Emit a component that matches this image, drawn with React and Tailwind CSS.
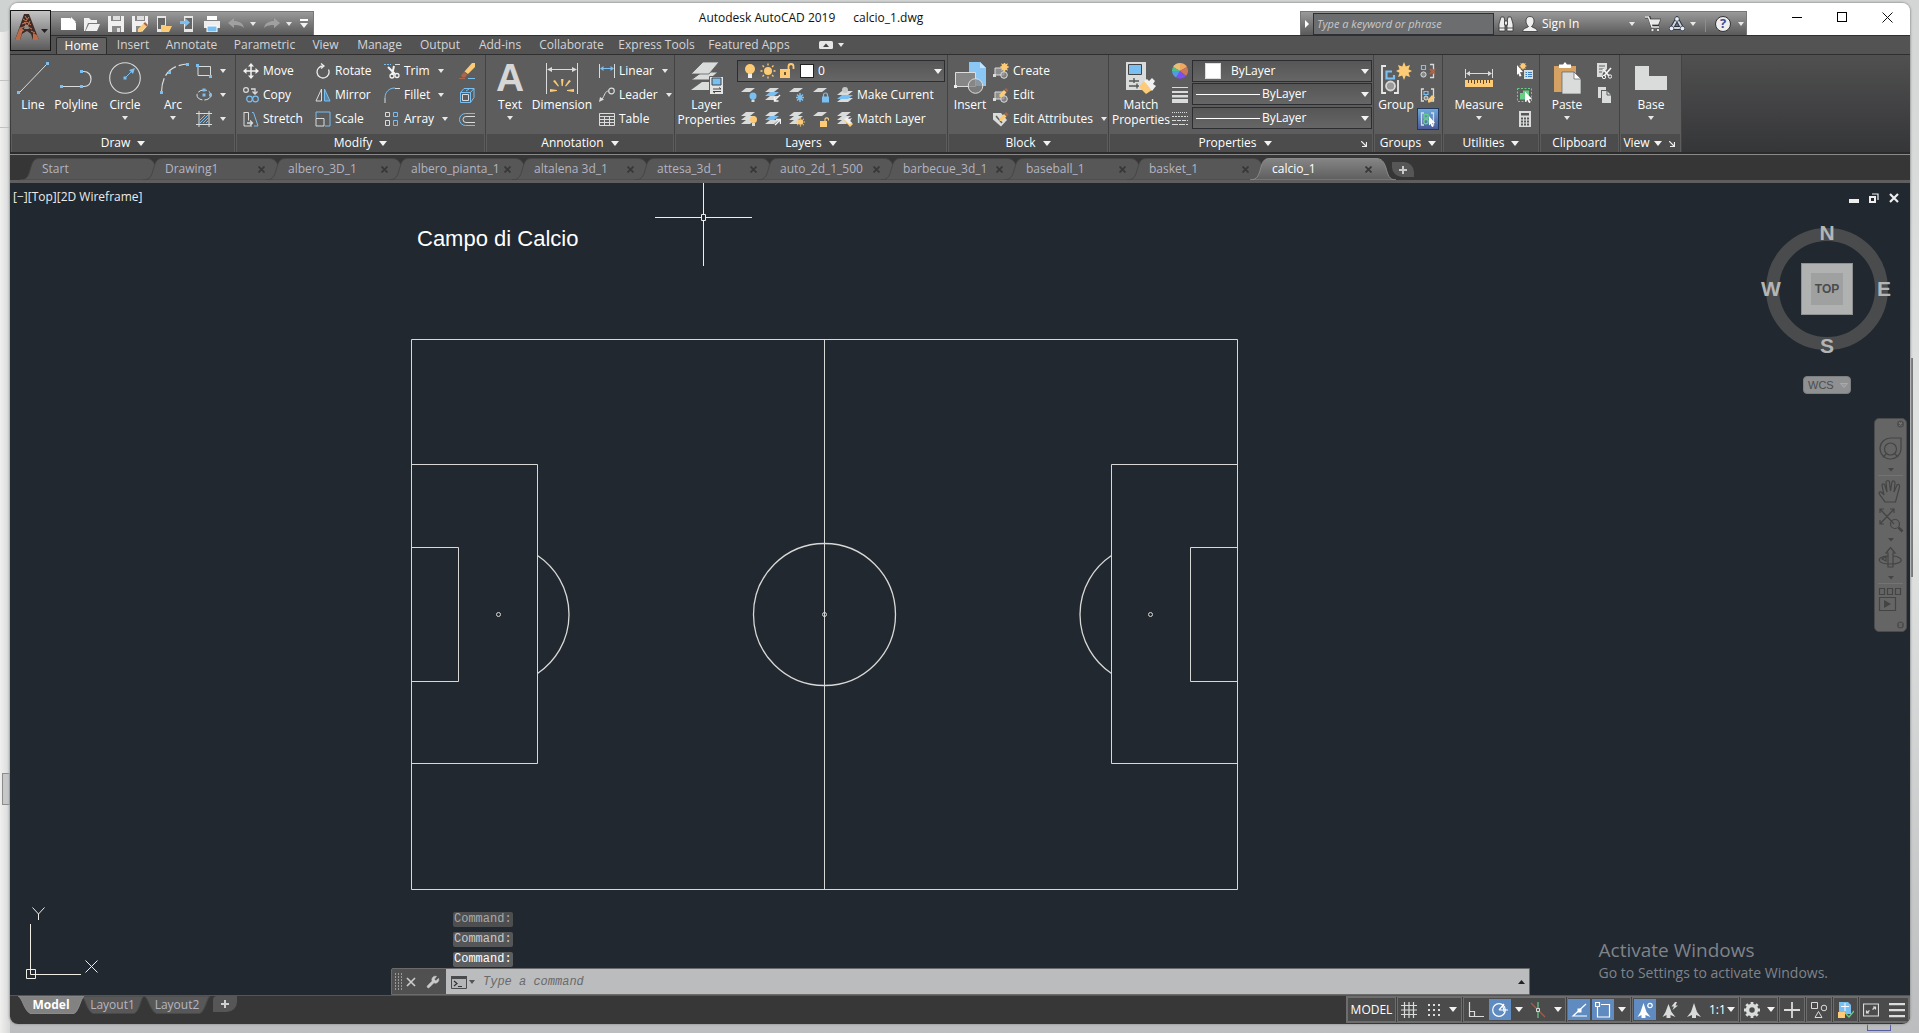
import React from "react";
import { Wrench } from "lucide-react";

const W = "#dadcdc";
const B = "#79bff2";
const Y = "#fdcb76";
const R = "#a8664a";
const G = "#66cf86";

const Tri = ({ className = "" }) => (
  <svg aria-hidden="true" className={"shrink-0 fill-[#e8e8e8] " + className} width="6" height="4" viewBox="0 0 6 4">
    <path d="M0 0h6L3 4z" />
  </svg>
);

const BigTri = ({ className = "" }) => (
  <svg aria-hidden="true" className={"shrink-0 fill-[#f2f2f2] " + className} width="8" height="5" viewBox="0 0 8 5">
    <path d="M0 0h8L4 5z" />
  </svg>
);

const sheet = (y, fill) => <path key={y} d={`M5 ${y}h9l-5 4H0z`} fill={fill} />;
const bracket = (
  <path d="M4 2H1.500V14H4M11 2h2.500v12H11" fill="none" stroke={W} strokeWidth="1.300" />
);
const sun = (cx, cy) => (
  <g stroke={Y} strokeWidth="1.200">
    <circle cx={cx} cy={cy} r="2.200" fill={Y} />
    <path d={`M${cx} ${cy - 4.5}v9M${cx - 4.5} ${cy}h9M${cx - 3.2} ${cy - 3.2}l6.400 6.400M${cx + 3.2} ${cy - 3.2}l-6.400 6.400`} strokeDasharray="1.200 6.600 1.200 0" />
  </g>
);
const pencil = (
  <g>
    <path d="M13 1l2.500 2.500-1.500 1.500L11.500 2.500z" fill={R} />
    <path d="M11 3l2.500 2.500L9 10H6.500V7.500z" fill={Y} />
  </g>
);
const blockBase = (
  <g>
    <path d="M2 5h9v7H2z" fill="#8d8d8d" stroke={W} />
    <circle cx="11" cy="12" r="3.300" fill="#8d8d8d" fillOpacity=".7" stroke={W} />
    <path d="M0 11h3v3H0z" fill={W} />
  </g>
);
const star = (x, y, r) => (
  <path
    d={`M${x} ${y - r}l${r * 0.25} ${r * 0.45} ${r * 0.45}-${r * 0.2}-${r * 0.2} ${r * 0.5} ${r * 0.5} ${r * 0.25}-${r * 0.5} ${r * 0.25} ${r * 0.2} ${r * 0.5}-${r * 0.45}-${r * 0.2}-${r * 0.25} ${r * 0.45}-${r * 0.25}-${r * 0.45}-${r * 0.45} ${r * 0.2} ${r * 0.2}-${r * 0.5}-${r * 0.5}-${r * 0.25} ${r * 0.5}-${r * 0.25}-${r * 0.2}-${r * 0.5} ${r * 0.45} ${r * 0.2}z`}
    fill={Y}
  />
);

const SMALL = {
  rect: (
    <g>
      <path d="M2 3.500h12.500v9H2z" fill="none" stroke={W} />
      <path d="M0 1h3v3H0zM13 12h3v3h-3z" fill={B} />
    </g>
  ),
  ellipse: (
    <g>
      <ellipse cx="8" cy="8" rx="7" ry="5" fill="none" stroke={W} strokeDasharray="9 2" />
      <path d="M6.500 1.500h3v3h-3zM6.500 6.500h3v3h-3zM13 6.500h3v3h-3z" fill={B} />
    </g>
  ),
  hatch: (
    <g fill="none">
      <path d="M3 0v16M13 0v16M0 2.500h16M0 13.500h16" stroke={W} />
      <path d="M4 9l5-5M4 12l8-8M7 12l5-5M10 12l2-2" stroke={B} />
    </g>
  ),
  move: (
    <g>
      <path d="M8 2v12M2 8h12" stroke="#f2f2f2" strokeWidth="1.500" />
      <path d="M8 0l3 3.500H5zM8 16l3-3.500H5zM0 8l3.500-3v6zM16 8l-3.500-3v6z" fill="#f2f2f2" />
    </g>
  ),
  copy: (
    <g fill="none">
      <circle cx="3" cy="3" r="2.400" stroke={W} strokeWidth="1.200" />
      <path d="M8 2h4v4M9.500 4.500L12 7l2.500-2.500" stroke={W} strokeWidth="1.300" />
      <circle cx="6.500" cy="12" r="2.800" stroke={B} strokeWidth="1.200" />
      <circle cx="12.500" cy="12" r="2.800" stroke={B} strokeWidth="1.200" />
    </g>
  ),
  stretch: (
    <g fill="none">
      <path d="M1 1.500h4.500v8M1 1v14h8" stroke={W} />
      <path d="M9 1.500h1.500L15 15h-4" stroke={B} />
      <path d="M4 12h5M7 9.500L9.500 12 7 14.500" stroke={W} strokeWidth="1.300" />
    </g>
  ),
  rotate: (
    <g fill="none" stroke="#ececec" strokeWidth="1.300">
      <path d="M8 3a6 6 0 1 0 5.500 3.500" />
      <path d="M6 .500L9 3 6 5.500" />
    </g>
  ),
  mirror: (
    <g fill="none">
      <path d="M6.500 2v12H1z" stroke={W} />
      <path d="M9.500 2v12H15z" stroke={B} fill="#5a86a8" />
    </g>
  ),
  scale: (
    <g fill="none">
      <path d="M1 7V1h14v14h-5" stroke={B} />
      <path d="M1 7.500h8V15H1z" stroke={W} />
    </g>
  ),
  trim: (
    <g fill="none">
      <path d="M0 1.500h7" stroke={B} strokeDasharray="2 1" />
      <path d="M11 1.500h5" stroke={W} />
      <path d="M4 4l7 7M10 3l-2 9" stroke="#f2f2f2" strokeWidth="2" />
      <circle cx="8" cy="13" r="2" stroke="#f2f2f2" strokeWidth="1.300" />
      <circle cx="13" cy="12.500" r="2" stroke="#f2f2f2" strokeWidth="1.300" />
    </g>
  ),
  fillet: (
    <g fill="none">
      <path d="M1 11C1 5 5 1 11 1" stroke={B} />
      <path d="M11 1.500h5M1 11v5" stroke={W} />
    </g>
  ),
  array: (
    <g fill="none">
      <path d="M1.500 1.500h4v4h-4zM1.500 9.500h4v5h-4z" stroke={W} />
      <path d="M9.500 1.500h4v4h-4zM9.500 9.500h4v5h-4z" stroke={B} />
    </g>
  ),
  erase: (
    <g>
      <path d="M13 0h3v4l-7 7-3.500-2.500z" fill={Y} />
      <path d="M5 9l3.500 2.500-2.500 3H3.500L2 12.500z" fill={R} />
      <path d="M0 15.500h6" stroke={R} />
      <path d="M9 15.500h7" stroke={B} />
    </g>
  ),
  explode: (
    <g fill="none">
      <path d="M1.500 5.500h10v10h-10z" stroke={B} />
      <path d="M3.500 7.500h6v6h-6z" stroke={W} />
      <path d="M1.500 5.500L5 1.500h10v9l-3.500 5M11.500 5.500L15 1.500M7 4l3-2" stroke={B} />
    </g>
  ),
  offset: (
    <g fill="none">
      <path d="M16 2.500H6.500a5.500 5.500 0 0 0 0 12H16" stroke={B} />
      <path d="M16 5.500H7a3 3 0 0 0 0 6h9" stroke={W} />
    </g>
  ),
  linear: (
    <g fill="none">
      <path d="M.500 1v14M15.500 1v14" stroke={W} />
      <path d="M2 5.500h12" stroke={B} />
      <path d="M4.500 3L1 5.500 4.500 8zM11.500 3L15 5.500 11.500 8z" fill={B} />
    </g>
  ),
  leader: (
    <g fill="none">
      <circle cx="12.500" cy="4" r="2.800" stroke={W} strokeWidth="1.200" />
      <path d="M9.500 4C6 4 6 8 2.500 13" stroke={W} />
      <path d="M0 15l1-5 4 2.500z" fill={W} />
    </g>
  ),
  table: (
    <g fill="none" stroke={W}>
      <path d="M.500 2.500h15v12H.500zM.500 5.500h15M.500 8.500h15M.500 11.500h15M5.500 5v9M10.500 5v9" />
    </g>
  ),
  lay1: (
    <g>
      {sheet(1, W)}
      <circle cx="12" cy="9" r="3.500" fill={B} />
      <path d="M10.500 12.500h3V15h-3z" fill={W} />
    </g>
  ),
  lay2: (
    <g>
      {sheet(9, W)}
      {sheet(5, B)}
      {sheet(1, W)}
      <path d="M15 8l-5 5M9.500 10v4h4" stroke="#f4f4f4" strokeWidth="1.400" fill="none" />
    </g>
  ),
  lay3: (
    <g>
      {sheet(1, W)}
      <path d="M11 6v9M7 10.500h8M8 7.500l6 6M14 7.500l-6 6" stroke={B} strokeWidth="1.500" />
    </g>
  ),
  lay4: (
    <g>
      {sheet(1, W)}
      <path d="M9 9.500h7v6H9z" fill={B} />
      <path d="M10.500 10V8a2 2 0 0 1 4 0v2" stroke={B} fill="none" strokeWidth="1.200" />
    </g>
  ),
  lay5: (
    <g>
      <path d="M5 11h11l-5 4H0z" fill={W} />
      <path d="M5 8h11l-5 4H0z" fill={B} />
      <path d="M5 4h11l-5 4H0z" fill={W} />
      <circle cx="8" cy="3" r="3" fill="#c6c8c8" />
    </g>
  ),
  lay6: (
    <g>
      {sheet(9, W)}
      {sheet(5, W)}
      {sheet(1, W)}
      <circle cx="12.500" cy="8.500" r="3.500" fill={Y} />
      <path d="M11 12h3v3h-3z" fill={W} />
    </g>
  ),
  lay7: (
    <g>
      {sheet(9, W)}
      {sheet(5, B)}
      {sheet(1, W)}
      <path d="M10 14l5-5M11 8.500h4.500V13" stroke="#f4f4f4" strokeWidth="1.400" fill="none" />
    </g>
  ),
  lay8: (
    <g>
      {sheet(9, W)}
      {sheet(5, W)}
      {sheet(1, W)}
      {sun(11.5, 11)}
    </g>
  ),
  lay9: (
    <g>
      {sheet(1, W)}
      <path d="M7 10h7v6H7z" fill={Y} />
      <path d="M12 10V8a2 2 0 0 1 3.500 0v1.500" stroke={Y} fill="none" strokeWidth="1.200" />
    </g>
  ),
  lay10: (
    <g>
      {sheet(9, W)}
      {sheet(5, W)}
      {sheet(1, W)}
      <path d="M7 9l3-2 6 6-3 3z" fill={Y} />
      <path d="M10 6l2 2 3-1-2 3 2 2-3 1-5-5z" fill="#f0f0f0" />
    </g>
  ),
  create: (
    <g>
      {blockBase}
      {star(11.5, 4, 5)}
    </g>
  ),
  edit: (
    <g>
      {blockBase}
      {pencil}
    </g>
  ),
  attrib: (
    <g>
      <path d="M0 2h8l6 7-6 6.500-8-7z" fill={W} />
      <path d="M3 5l6 7" stroke="#5d5d5d" strokeWidth="1.500" />
      {pencil}
    </g>
  ),
  wheel: (
    <g>
      <path d="M8 8V0a8 8 0 0 1 7 4z" fill="#f0a860" />
      <path d="M8 8V0a8 8 0 0 0-7 4z" fill="#e5c07a" />
      <path d="M8 8l7-4a8 8 0 0 1-1 9z" fill="#c9785a" />
      <path d="M8 8l6 5a8 8 0 0 1-10 1.500z" fill="#7b4ff0" />
      <path d="M8 8l-4 6.500A8 8 0 0 1 0 8z" fill="#4f9be8" />
      <path d="M8 8H0a8 8 0 0 1 1-4z" fill="#4fc08a" />
    </g>
  ),
  weight: <path d="M0 0h16v1H0zM0 4h16v2H0zM0 8h16v2.500H0zM0 12h16v4H0z" fill={W} />,
  ltype: (
    <g stroke={W} fill="none">
      <path d="M0 1.500h16" strokeDasharray="1 1" />
      <path d="M0 5.500h16" strokeDasharray="2 1" />
      <path d="M0 9.500h16" strokeDasharray="4 1" />
      <path d="M0 13.500h16" strokeDasharray="6 1" />
    </g>
  ),
  ungroup: (
    <g>
      <path d="M10 1.500h3.500v13H10" fill="none" stroke={W} strokeWidth="1.300" />
      <path d="M1.500 2.500h4v4h-4z" fill="none" stroke={B} strokeWidth="1.200" />
      <circle cx="3.500" cy="11.500" r="2.600" fill="#888" stroke={W} />
      <path d="M10 6l5 5M15 6l-5 5" stroke={R} strokeWidth="1.800" />
    </g>
  ),
  groupedit: (
    <g>
      {bracket}
      <path d="M4 4.500h4v3H4z" fill="none" stroke={B} strokeWidth="1.200" />
      <circle cx="6" cy="11" r="2" fill="#888" stroke={W} />
      <path d="M12 8l3 2.500-5 5H8v-3z" fill={Y} />
    </g>
  ),
  groupsel: (
    <g>
      {bracket}
      <path d="M4 3.500h4v3.500H4z" fill="none" stroke={G} strokeWidth="1.400" />
      <circle cx="6" cy="10.500" r="2.200" fill="none" stroke={G} strokeWidth="1.400" />
      <path d="M9 5l6 7-3 .300 1.500 3.200-1.500.500-1.400-3L9 14.500z" fill="#fff" />
    </g>
  ),
  qselect: (
    <g>
      {star(6, 3, 4)}
      <path d="M0 2l6 7-3 .300L4.500 13l-2 .500-1-3L0 12z" fill="#fff" />
      <path d="M7 7h9v9H7z" fill={W} />
      <path d="M8.500 9.500h1.500M11 9.500h4M8.500 11.500h1.500M11 11.500h4M8.500 13.500h1.500M11 13.500h4" stroke="#3c7fc0" />
    </g>
  ),
  selall: (
    <g>
      <path d="M.500 1.500h14v13H.500z" fill="none" stroke={G} strokeDasharray="2 1.500" />
      <path d="M3 6h3V3.500h6V9H9v3.500H3z" fill={G} />
      <path d="M8 4.500l7 7.500-3 .300 1.500 3.200-1.500.500-1.500-3L8 15z" fill="#fff" />
    </g>
  ),
  calc: (
    <g>
      <path d="M2 0h12v16H2z" fill={W} />
      <path d="M4 2h8v2.500H4z" fill="#555" />
      <path d="M4 6.500h2v2H4zM7 6.500h2v2H7zM10 6.500h2v2h-2zM4 9.500h2v2H4zM7 9.500h2v2H7zM10 9.500h2v2h-2zM4 12.500h2v2H4zM7 12.500h2v2H7zM10 12.500h2v2h-2z" fill="#555" />
    </g>
  ),
  cut: (
    <g>
      <path d="M1 0h10v6l-4 4-1 4H1z" fill={W} />
      <path d="M3 3h6M3 6h5M3 9h3" stroke="#5d5d5d" />
      <path d="M7 6l6 7M15 5l-7 8" stroke="#f4f4f4" strokeWidth="1.600" />
      <circle cx="8" cy="14" r="1.700" fill="none" stroke="#f4f4f4" />
      <circle cx="14" cy="13.500" r="1.700" fill="none" stroke="#f4f4f4" />
    </g>
  ),
  clip: (
    <g fill={W}>
      <path d="M2 0h8v3H5v8H2z" />
      <path d="M6 4h5l4 4v8H6z" />
      <path d="M11 4v4h4" fill="none" stroke="#5d5d5d" />
    </g>
  ),
  bulb: (
    <g>
      <circle cx="8" cy="6" r="5" fill={Y} />
      <path d="M6 11h4v4H6z" fill="#eee" />
      <path d="M5.500 8h5L10 11H6z" fill={Y} />
    </g>
  ),
  sunny: (
    <g>
      <circle cx="8" cy="8" r="4" fill={Y} />
      <path d="M8 .500v2M8 13.500v2M.500 8h2M13.500 8h2M2.500 2.500L4 4M12 12l1.500 1.500M13.500 2.500L12 4M4 12l-1.500 1.500" stroke={Y} strokeWidth="1.300" />
    </g>
  ),
  unlock: (
    <g>
      <path d="M1 6h10v9H1z" fill={Y} />
      <path d="M9.500 6V3.500a2.500 2.500 0 0 1 5 0V6" fill="none" stroke={Y} strokeWidth="1.800" />
      <path d="M5 9h2v3H5z" fill="#6a5530" />
    </g>
  ),
  qnew: <path d="M1 2h9l6 5v7H1zM11 1l5 5h-5z" fill="#fff" />,
  qopen: <path d="M0 15V2h5l2 2h6v3H4l-3 8zM5 8h11l-3 7H1.500z" fill="#f0f0f0" />,
  qsave: (
    <g>
      <path d="M0 0h16v16H0z" fill="#f0f0f0" />
      <path d="M3 0h10v5H3zM4 10h9v6H4z" fill="#888" />
      <path d="M5 0h7v4H5zM9 12h3v4H9z" fill="#ddd" />
    </g>
  ),
  qsaveas: (
    <g>
      <path d="M0 0h16v9l-6 7H0z" fill="#f0f0f0" />
      <path d="M3 0h10v5H3zM4 10h6v6H4z" fill="#888" />
      <path d="M5 0h7v4H5z" fill="#ddd" />
      <path d="M12 7l3 3-6 6H6v-3z" fill={Y} />
      <path d="M13 6l3 3-1.500 1.500-3-3z" fill={R} />
    </g>
  ),
  qmob1: (
    <g>
      <path d="M1 0h9v16H1z" fill="#e6e6e6" />
      <path d="M2 2h7v11H2z" fill="#666" />
      <path d="M5 9h4l1 1h6l-3 6H5z" fill={Y} />
    </g>
  ),
  qmob2: (
    <g>
      <path d="M4 0h9v16H4z" fill="#e6e6e6" />
      <path d="M5 2h7v11H5z" fill="#666" />
      <path d="M0 5h5V2l5 4.500L5 11V8H0z" fill={B} />
    </g>
  ),
  qprint: (
    <g>
      <path d="M3 0h10v4H3z" fill="#fff" />
      <path d="M0 5h16v7H0z" fill="#eee" />
      <path d="M3 10h10v6H3z" fill={B} stroke="#fff" />
    </g>
  ),
  qundo: <path d="M0 7l6-5v3c5 0 9 2 10 7-3-3-6-3-10-3v3z" fill="#a0a0a0" />,
  qredo: <path d="M16 7l-6-5v3C5 5 1 7 0 12c3-3 6-3 10-3v3z" fill="#a0a0a0" />,
  binoc: (
    <g fill="#eee" stroke="#333" strokeWidth=".800">
      <path d="M3 1h3l1 5v9H1V8zM10 1h3l2 7v7H9V6z" />
      <path d="M6.500 5h3v4h-3z" />
      <path d="M1 12h6M9 12h6" />
    </g>
  ),
  user: (
    <g fill="#f0f0f0" stroke="#333" strokeWidth=".800">
      <path d="M8 .500c3 0 4 2 4 4.500S11 9 9.500 10.500C11 12 15 12 15.500 15.500H.500C1 12 5 12 6.500 10.500 5 9 4 7.500 4 5S5 .500 8 .500z" />
    </g>
  ),
  cart: (
    <g>
      <path d="M0 1h4l3 9h7" fill="none" stroke="#333" strokeWidth="3" />
      <path d="M4 3h12l-2.500 6H6z" fill="#e8e8e8" stroke="#333" strokeWidth=".700" />
      <path d="M0 1h3.500L7 11h7" fill="none" stroke="#f0f0f0" strokeWidth="1.500" />
      <circle cx="7.500" cy="14" r="1.600" fill="#eee" stroke="#333" strokeWidth=".600" />
      <circle cx="13" cy="14" r="1.600" fill="#eee" stroke="#333" strokeWidth=".600" />
    </g>
  ),
  tri: (
    <g>
      <path d="M8 3L3 12h10z" fill="none" stroke="#2b3345" strokeWidth="4" />
      <path d="M8 3L3 12h10z" fill="none" stroke="#cfd5dd" strokeWidth="2" />
      <circle cx="8" cy="3" r="2.300" fill="#e8eef4" stroke="#2b3345" strokeWidth=".700" />
      <circle cx="2.500" cy="12.500" r="2.300" fill="#e8eef4" stroke="#2b3345" strokeWidth=".700" />
      <circle cx="13.500" cy="12.500" r="2.300" fill="#e8eef4" stroke="#2b3345" strokeWidth=".700" />
    </g>
  ),
  grid: <path d="M3.500 0v16M8 0v16M12.500 0v16M0 3.500h16M0 8h16M0 12.500h16" stroke={W} strokeWidth="1.200" />,
  snap: (
    <path d="M2 2h2v2H2zM7 2h2v2H7zM12 2h2v2h-2zM2 7h2v2H2zM7 7h2v2H7zM12 7h2v2h-2zM2 12h2v2H2zM7 12h2v2H7zM12 12h2v2h-2z" fill={W} />
  ),
  ortho: <path d="M1.500 0v14.500H16M1.500 9.500h5v5" fill="none" stroke={W} strokeWidth="1.200" />,
  polar: (
    <g fill="none" stroke="#fff" strokeWidth="1.200">
      <circle cx="7" cy="8" r="6.300" />
      <path d="M7 8h9M7 8l5-6M10.500 4c1 1.500 1.500 2.500 1.500 6" />
    </g>
  ),
  iso: (
    <g fill="none">
      <path d="M8 0v16" stroke={G} strokeWidth="1.200" />
      <path d="M1 1l14 14" stroke="#a35c4c" strokeWidth="1.200" />
      <path d="M6.500 6.500h3v3h-3z" fill="#555" stroke={W} />
    </g>
  ),
  otrack: (
    <g fill="none" stroke="#fff" strokeWidth="1.200">
      <path d="M15 2L2 14h14" />
      <path d="M6.500 6.500h4v4h-4z" fill="#fff" stroke="none" />
    </g>
  ),
  osnap: <path d="M2.500 5v10h12V2.500H6M.500.500h4v4h-4z" fill="none" stroke="#fff" strokeWidth="1.200" />,
  anno1: (
    <g>
      <path d="M6.500 1l3 9 4 5-5-2v3h-4v-3l-4 2 3-5z" fill="#fff" />
      <circle cx="13" cy="3.500" r="2.200" fill="none" stroke="#fff" strokeWidth="1.200" />
    </g>
  ),
  anno2: (
    <g fill={W}>
      <path d="M6.500 2l3 8 4 5-5-2v3h-4v-3l-4 2 3-5z" />
      <path d="M13 0l-3.500 4.500H12L10.500 8 16 3.500h-2.500L15 0z" />
    </g>
  ),
  anno3: <path d="M8 1l3 9 4 5-5-2v3H6v-3l-5 2 4-5z" fill={W} />,
  gear: (
    <g>
      <circle cx="8" cy="8" r="4.500" fill="none" stroke={W} strokeWidth="3.500" />
      <path d="M8 0v4M8 12v4M0 8h4M12 8h4M2.300 2.300l2.500 2.500M11.200 11.200l2.500 2.500M13.700 2.300l-2.500 2.500M4.800 11.200l-2.500 2.500" stroke={W} strokeWidth="2.800" />
    </g>
  ),
  plus: <path d="M8 0v16M0 8h16" stroke={W} strokeWidth="1.800" />,
  shapes: (
    <g fill="none" stroke={W}>
      <path d="M.500.500h6v6h-6zM7.500 9.500l3.500 6H4z" />
      <circle cx="13" cy="6" r="2.800" />
    </g>
  ),
  docs: (
    <g>
      <path d="M1 0h9l3 3v9H1z" fill={B} />
      <path d="M0 10h7v6H0z" fill={Y} />
      <path d="M3 4.500h8M7 1v8" stroke="#fff" />
      <path d="M8 12l3 3 5-6" fill="none" stroke={G} strokeWidth="1.300" />
    </g>
  ),
  full: (
    <g fill="none" stroke={W} strokeWidth="1.200">
      <path d="M.500 2h15v12H.500z" />
      <path d="M3.500 8.500V11H6M10 5h2.500v2.500M4 10.500l2.500-2M12 5.500l-2.500 2" />
    </g>
  ),
  menu: <path d="M0 1h16v2.200H0zM0 7h16v2.200H0zM0 13h16v2.200H0z" fill={W} />,
  prompt: (
    <g>
      <path d="M.500 2.500h15v12H.500z" fill="#b5b6b8" stroke="#4a4a4a" />
      <path d="M0 2h16v3H0z" fill="#4a4a4a" />
      <path d="M3 7l3 2.500L3 12M7 12.500h4" fill="none" stroke="#333" strokeWidth="1.200" />
    </g>
  ),
};

const Ico = ({ n, className = "" }) => (
  <svg aria-hidden="true" className={"h-4 w-4 shrink-0 " + className} viewBox="0 0 16 16">
    {SMALL[n]}
  </svg>
);

const BIG = {
  line: (
    <g>
      <path d="M3 30L29 3" stroke={W} fill="none" />
      <path d="M0 29h3v3H0zM29 0h3v3h-3z" fill={B} />
    </g>
  ),
  polyline: (
    <g>
      <path d="M0 24.500h21M21 9.500h3a7 7 0 0 1 7 7.500c0 5-3 7.500-7 7.500h-3" stroke={W} fill="none" strokeWidth="1.200" />
      <path d="M0 23h3v3H0zM20 8h3v3h-3zM20 23h3v3h-3z" fill={B} />
    </g>
  ),
  circle: (
    <g>
      <circle cx="16" cy="16" r="15.300" fill="none" stroke={W} strokeWidth="1.100" />
      <path d="M16 16l7-7" stroke={B} />
      <path d="M14.500 14.500h3v3h-3zM26 6l-2 6-4-4z" fill={B} />
    </g>
  ),
  arc: (
    <g>
      <path d="M4.500 30C5 12 14 3 31 2" fill="none" stroke={W} strokeDasharray="14 3" strokeWidth="1.200" />
      <path d="M3 29h3v3H3zM11 9h3v3h-3zM29 1h3v3h-3z" fill={B} />
    </g>
  ),
  dimension: (
    <g>
      <path d="M.500 1v31M31.500 1v31M2 7.500h28" stroke={W} fill="none" />
      <path d="M6 5L1 7.500 6 10zM26 5l5 2.500L26 10z" fill={W} />
      <g fill={Y}>
        <path d="M15 17h2.500l-.700 7h-1.200zM7 19l2-1 4 6-1 .500zM25 19l-2-1-4 6 1 .500zM4 27l7 1v1l-7 1zM28 27l-7 1v1l7 1z" />
      </g>
    </g>
  ),
  layerprops: (
    <g>
      <path d="M11 20h16l-9 8H0z" fill={W} />
      <path d="M11 10h16l-9 8H0z" fill={W} stroke="#5d5d5d" />
      <path d="M12 0h16L18 12H0z" fill={W} stroke="#5d5d5d" strokeWidth=".800" />
      <path d="M18.500 14.500h14V33h-14z" fill="#e4e4e4" stroke="#5d5d5d" />
      <path d="M21 16h9v7h-9z" fill={B} stroke="#444" />
      <path d="M22 27h8M22 29.500h8M28 25.500l2 1.500M24 31l-2-1.500" stroke="#444" fill="none" />
    </g>
  ),
  insert: (
    <g>
      <path d="M15 0h11l6 6v18H15z" fill="#8ac7f4" />
      <path d="M26 0v6h6" fill="#c5e3fa" />
      <path d="M1.500 10.500h20v14h-20z" fill="#868686" stroke="#ddd" />
      <circle cx="21.500" cy="24" r="7.300" fill="#868686" fillOpacity=".75" stroke="#ddd" />
      <path d="M0 23h3v3H0z" fill="#eee" />
    </g>
  ),
  match: (
    <g>
      <path d="M1 0h20v28H1z" fill={W} />
      <path d="M3.500 2.500h13v10h-13z" fill={B} stroke="#444" />
      <path d="M4 19h10M9 16v5M4 24h10M12 21.500v5" stroke="#555" fill="none" strokeWidth="1.400" />
      <path d="M14 25l5-6 8 9-6 4z" fill={Y} />
      <path d="M19 19l3-2 2 2 3-3 3 3-2 3 3 2-4 5z" fill="#f0f0f0" />
    </g>
  ),
  group: (
    <g>
      <path d="M6 4H2v27h4M14 31h4V18" fill="none" stroke="#e8e8e8" strokeWidth="1.800" />
      <path d="M12 9.500H6.500v7H14V13" fill="none" stroke={B} strokeWidth="2.200" />
      <circle cx="10.500" cy="24" r="4.500" fill="#999" stroke="#d5d5d5" strokeWidth="1.800" />
      <path d="M24 0l1.800 4.500L30 3l-1.500 4.200L32 9l-3.500 1.800L30 15l-4.200-1.500L24 18l-1.800-4.500L18 15l1.500-4.200L16 9l3.500-1.800L18 3l4.200 1.500z" fill={Y} />
    </g>
  ),
  measure: (
    <g>
      <path d="M2.500 7v9M29.500 7v9M4 11.500h24" stroke={W} fill="none" />
      <path d="M7 9l-4 2.500L7 14zM25 9l4 2.500L25 14z" fill={W} />
      <path d="M2 18h28v7H2z" fill={Y} />
      <path d="M5.500 18v3M8.500 18v3M11.500 18v4M14.500 18v3M17.500 18v3M20.500 18v4M23.500 18v3M26.500 18v3" stroke="#5a4a30" />
    </g>
  ),
  paste: (
    <g>
      <path d="M3 4h22v26H3z" fill="#d5a263" />
      <path d="M8 2.500h4l2-2.500 2 2.500h4V6H8z" fill="#fff" />
      <path d="M11 10h12l7 7v15H11z" fill={W} stroke="#5d5d5d" strokeWidth=".700" />
      <path d="M23 10v7h7z" fill="#fff" stroke="#5d5d5d" strokeWidth=".700" />
    </g>
  ),
  base: <path d="M0 4h14v10h18v14H0z" fill={W} />,
};

const Big = ({ n, label, className, arrow }) => (
  <button type="button" className={"flex shrink-0 flex-col items-center pt-[3px] text-[12px] leading-[15px] text-white " + className}>
    {n === "text" ? (
      <span aria-hidden="true" className="flex h-8 items-center font-['Liberation_Sans'] text-[39px] leading-8 font-bold text-[#d6d6d6]">A</span>
    ) : (
      <svg aria-hidden="true" className="h-8 w-8" viewBox="0 0 32 32">{BIG[n]}</svg>
    )}
    <span className="mt-[3px]">
      {label.map((l) => (
        <span key={l} className="block whitespace-nowrap">{l}</span>
      ))}
    </span>
    {arrow && <Tri className="mt-1" />}
  </button>
);

const Row = ({ n, label, arrow, className = "" }) => (
  <button type="button" aria-label={label || n} className={"flex h-6 items-center gap-1 text-[12px] whitespace-nowrap text-white " + className}>
    <Ico n={n} />
    {label && <span>{label}</span>}
    {arrow && <Tri className="ml-1" />}
  </button>
);

const Panel = ({ title, arrow = true, launcher, className, children }) => (
  <section className={"flex shrink-0 flex-col border-r border-[#434343] bg-[#5d5d5d] px-px " + className}>
    <div className="flex h-[79px] items-start pt-1">{children}</div>
    <div className={"relative flex h-[18px] items-center justify-center bg-[#4c4c4c] text-[12px] text-white " + (launcher === "near" ? "gap-1 pr-4" : launcher ? "gap-[7px] pr-3" : "gap-[7px]")}>
      <span>{title}</span>
      {arrow && <BigTri />}
      {launcher && (
        <svg aria-hidden="true" className="absolute right-[5px] bottom-[5px]" width="6" height="6" viewBox="0 0 6 6">
          <path d="M0 0l5 5M5.500 1v4.500H1" stroke="#eee" fill="none" strokeWidth="1.200" />
        </svg>
      )}
    </div>
  </section>
);

const Combo = ({ label, value, children, className = "" }) => (
  <div className={"relative flex h-[22px] items-center border border-[#2b2d30] bg-linear-to-b from-[#565656] to-[#666] " + className}>
    {children}
    <select aria-label={label} defaultValue={value} className="h-full min-w-0 flex-1 appearance-none bg-transparent text-[12px] leading-4 text-white outline-none">
      <option>{value}</option>
    </select>
    <BigTri className="pointer-events-none absolute right-[2px]" />
  </div>
);

const MENU = [
  ["Insert", "w-[48px]"],
  ["Annotate", "w-[69px]"],
  ["Parametric", "w-[77px]"],
  ["View", "w-[45px]"],
  ["Manage", "w-[63px]"],
  ["Output", "w-[58px]"],
  ["Add-ins", "w-[62px]"],
  ["Collaborate", "w-[81px]"],
  ["Express Tools", "w-[89px]"],
  ["Featured Apps", "w-[96px]"],
];

const TitleBar = () => (
  <header className="relative flex h-8 shrink-0 items-end justify-between bg-white">
    <div className="flex h-6 items-center gap-2 border border-b-0 border-[#777] bg-linear-to-b from-[#9a9a9a] to-[#5a5a5a] pr-[5px] pl-[49px]">
      {["qnew", "qopen", "qsave", "qsaveas", "qmob1", "qmob2", "qprint"].map((n) => (
        <button type="button" key={n} aria-label={n.slice(1)}><Ico n={n} className="block" /></button>
      ))}
      <button type="button" aria-label="Undo" className="flex items-center gap-[6px]"><Ico n="qundo" /><Tri /></button>
      <button type="button" aria-label="Redo" className="flex items-center gap-[6px]"><Ico n="qredo" /><Tri /></button>
      <button type="button" aria-label="Customize" className="flex flex-col items-center gap-[2px]">
        <span className="h-[2px] w-2 bg-white" />
        <BigTri />
      </button>
    </div>
    <h1 className="absolute inset-x-0 top-[6px] flex justify-center gap-[18px] pr-[298px] text-[12px] leading-[18px] text-[#111]">
      <span>Autodesk AutoCAD 2019</span>
      <span>calcio_1.dwg</span>
    </h1>
    <div className="flex h-8 items-end">
      <div className="relative flex h-6 w-[447px] items-center border border-b-0 border-[#777] bg-linear-to-b from-[#9a9a9a] to-[#5a5a5a] text-[12px] text-white">
        <svg aria-hidden="true" className="mr-[4px] ml-1" width="4" height="8" viewBox="0 0 4 8"><path d="M0 0l4 4-4 4z" fill="#fff" /></svg>
        <input
          aria-label="Search"
          placeholder="Type a keyword or phrase"
          className="h-[22px] w-[181px] border border-[#2c2f33] bg-[#6b6d6f] px-[3px] text-[11px] text-white italic placeholder-[#c9c9c9] outline-none"
        />
        <Ico n="binoc" className="ml-1" />
        <button type="button" className="ml-2 flex items-center gap-1 text-white">
          <Ico n="user" />
          <span className="w-[83px] text-left">Sign In</span>
          <Tri />
        </button>
        <Ico n="cart" className="ml-[10px]" />
        <Ico n="tri" className="ml-2" />
        <Tri className="ml-[5px]" />
        <span className="mx-[9px] h-4 w-px bg-[#8c8c8c]" />
        <button type="button" aria-label="Help" className="flex h-4 w-4 items-center justify-center rounded-full border border-[#333] bg-[#eee] text-[13px] leading-none font-bold text-[#3c4a9a]">?</button>
        <Tri className="ml-[7px]" />
      </div>
      <div className="flex h-8 w-[163px] items-start justify-end gap-[35px] pt-[9px] pr-[17px] text-black">
        <button type="button" aria-label="Minimize" className="flex h-[10px] w-[10px] items-center"><span className="block h-px w-[10px] bg-black" /></button>
        <button type="button" aria-label="Maximize" className="h-[10px] w-[10px] border border-black" />
        <button type="button" aria-label="Close">
          <svg width="11" height="11" viewBox="0 0 11 11" className="block"><path d="M.500.500l10 10M10.500.500l-10 10" stroke="#111" /></svg>
        </button>
      </div>
    </div>
    <button type="button" aria-label="Application menu" className="absolute top-[7px] left-0 z-10 flex h-[41px] w-[41px] items-start border border-[#151515] bg-linear-to-b from-[#c4c4c4] to-[#5c5c5c] pt-[2px] pl-1">
      <svg width="34" height="28" viewBox="0 0 34 28">
        <path d="M0 27L9 1h5l10 26h-6l-2-6-4-3-5 3-2 6z" fill="#3f2a25" />
        <path d="M0 27L5 14l3 2-3 11zM18 20l4 2 2 5h-6z" fill="#bd6a48" />
        <path d="M8 6l3 2 3-4M7 11l5-2 4 3M6 15l5-2 6 3M10 3l2 3M9 9l4 5M15 8l-3 6M5 19l4-2M16 18l4 2" stroke="#c47c5c" strokeWidth="1" fill="none" />
        <path d="M10 12h3l1 4H9z" fill="#8f8f8f" />
        <path d="M26 16h7l-3.500 4z" fill="#222" />
      </svg>
    </button>
  </header>
);

const MenuBar = () => (
  <nav aria-label="Ribbon tabs" className="flex h-5 shrink-0 items-end border-y border-[#2f2f2f] bg-[#535353] text-[12px] text-[#d3d3d8]">
    <button type="button" className="ml-[46px] h-[17px] w-[51px] rounded-t-[2px] border border-b-0 border-[#2c2c2c] bg-[#626262] leading-[14px] text-white">Home</button>
    {MENU.map(([m, w], i) => (
      <button type="button" key={m} className={"h-[18px] shrink-0 text-center leading-[16px] whitespace-nowrap " + w + (i === 0 ? " ml-[2px]" : "")}>{m}</button>
    ))}
    <button type="button" aria-label="Minimize ribbon" className="ml-[22px] flex h-[18px] items-center gap-[5px]">
      <svg width="14" height="8" viewBox="0 0 14 8"><rect width="14" height="8" rx="1.500" fill="#e6e6e6" /><path d="M4 6h6L7 2.500z" fill="#444" /></svg>
      <Tri />
    </button>
  </nav>
);

const Ribbon = () => (
  <div className="flex h-[99px] shrink-0 overflow-hidden border-b-2 border-b-[#2b2b2b] bg-linear-to-b from-[#505050] to-[#353638] pl-px">
    <Panel title="Draw" className="w-[225px]">
      <Big n="line" label={["Line"]} className="w-[42px]" />
      <Big n="polyline" label={["Polyline"]} className="w-[44px]" />
      <Big n="circle" label={["Circle"]} arrow className="w-[54px]" />
      <Big n="arc" label={["Arc"]} arrow className="w-[42px]" />
      <div className="ml-[2px]">
        <Row n="rect" arrow />
        <Row n="ellipse" arrow />
        <Row n="hatch" arrow />
      </div>
    </Panel>
    <Panel title="Modify" className="w-[250px]">
      <div className="ml-[6px] w-[72px]">
        <Row n="move" label="Move" />
        <Row n="copy" label="Copy" />
        <Row n="stretch" label="Stretch" />
      </div>
      <div className="w-[69px]">
        <Row n="rotate" label="Rotate" />
        <Row n="mirror" label="Mirror" />
        <Row n="scale" label="Scale" />
      </div>
      <div className="w-[75px]">
        <Row n="trim" label="Trim" arrow />
        <Row n="fillet" label="Fillet" arrow />
        <Row n="array" label="Array" arrow />
      </div>
      <div>
        <Row n="erase" />
        <Row n="explode" />
        <Row n="offset" />
      </div>
    </Panel>
    <Panel title="Annotation" className="w-[189px]">
      <Big n="text" label={["Text"]} arrow className="w-[46px]" />
      <Big n="dimension" label={["Dimension"]} className="w-[58px]" />
      <div className="ml-2">
        <Row n="linear" label="Linear" arrow />
        <Row n="leader" label="Leader" arrow />
        <Row n="table" label="Table" />
      </div>
    </Panel>
    <Panel title="Layers" className="w-[273px]">
      <Big n="layerprops" label={["Layer", "Properties"]} className="w-[61px]" />
      <div className="w-[209px]">
        <Combo label="Layer" value="0" className="mt-px mb-px w-[208px] pl-1">
          <Ico n="bulb" className="mr-[2px]" />
          <Ico n="sunny" className="mr-[3px]" />
          <Ico n="unlock" className="mr-[5px]" />
          <span className="mr-1 h-[14px] w-[14px] border border-[#222] bg-white" />
        </Combo>
        <div className="ml-[4px] flex gap-2">
          {["lay1", "lay2", "lay3", "lay4"].map((n) => <Row key={n} n={n} />)}
          <Row n="lay5" label="Make Current" />
        </div>
        <div className="ml-[4px] flex gap-2">
          {["lay6", "lay7", "lay8", "lay9"].map((n) => <Row key={n} n={n} />)}
          <Row n="lay10" label="Match Layer" />
        </div>
      </div>
    </Panel>
    <Panel title="Block" className="w-[161px]">
      <Big n="insert" label={["Insert"]} className="w-[42px]" />
      <div className="ml-[2px]">
        <Row n="create" label="Create" />
        <Row n="edit" label="Edit" />
        <Row n="attrib" label="Edit Attributes" arrow />
      </div>
    </Panel>
    <Panel title="Properties" launcher="far" className="w-[265px]">
      <Big n="match" label={["Match", "Properties"]} className="w-[62px]" />
      <div className="mr-[4px]">
        <Row n="wheel" />
        <Row n="weight" />
        <Row n="ltype" />
      </div>
      <div className="flex w-[180px] flex-col gap-px pt-px">
        <Combo label="Object color" value="ByLayer" className="pl-3">
          <span className="mr-[10px] h-4 w-4 border border-[#ddd] bg-white" />
        </Combo>
        <Combo label="Lineweight" value="ByLayer" className="mb-px pl-[3px]"><span className="mr-[2px] h-px w-16 bg-white" /></Combo>
        <Combo label="Linetype" value="ByLayer" className="pl-[3px]"><span className="mr-[2px] h-px w-16 bg-white" /></Combo>
      </div>
    </Panel>
    <Panel title="Groups" className="w-[69px]">
      <Big n="group" label={["Group"]} className="w-[42px]" />
      <div className="flex flex-col">
        <Row n="ungroup" className="justify-center" />
        <Row n="groupedit" className="justify-center" />
        <button type="button" aria-label="Group selection" className="mt-px flex h-[22px] w-[22px] items-center justify-center border border-[#23395c] bg-linear-to-b from-[#6ba9de] to-[#4b5b9a]"><Ico n="groupsel" /></button>
      </div>
    </Panel>
    <Panel title="Utilities" className="w-[97px]">
      <Big n="measure" label={["Measure"]} arrow className="ml-1 w-[62px]" />
      <div className="ml-[7px]">
        <Row n="qselect" />
        <Row n="selall" />
        <Row n="calc" />
      </div>
    </Panel>
    <Panel title="Clipboard" arrow={false} className="w-[80px]">
      <Big n="paste" label={["Paste"]} arrow className="ml-[6px] w-[40px]" />
      <div className="ml-[9px]">
        <Row n="cut" />
        <Row n="clip" />
      </div>
    </Panel>
    <Panel title="View" launcher="near" className="w-[62px]">
      <Big n="base" label={["Base"]} arrow className="w-[60px]" />
    </Panel>
  </div>
);

const FILES = ["Start", "Drawing1", "albero_3D_1", "albero_pianta_1", "altalena 3d_1", "attesa_3d_1", "auto_2d_1_500", "barbecue_3d_1", "baseball_1", "basket_1", "calcio_1"];

const Cross = ({ className = "" }) => (
  <svg width="7" height="7" viewBox="0 0 7 7" className={className}><path d="M.500.500l6 6M6.500.500l-6 6" stroke="currentColor" strokeWidth="1.800" /></svg>
);

const FileTabs = () => (
  <div className="flex h-[29px] shrink-0 items-start overflow-hidden border-t border-b-[3px] border-t-[#8a8a8a] border-b-[#5e5e5e] bg-[#363636] pt-[3px] pl-5">
    {FILES.map((f, i) => {
      const active = i === FILES.length - 1;
      return (
        <div key={f} className={"relative flex h-[22px] w-[123px] shrink-0 items-center justify-between pr-[11px] pl-3 text-[12px] " + (active ? "z-10 text-white" : "text-[#b4b4c0]")}>
          <svg aria-hidden="true" className="absolute top-0 -left-[10px] h-[22px] w-[146px]" viewBox="0 0 146 22">
            <path
              d="M0 22C8 22 9 16 11 9 13 2 15 .500 20 .500H126C132 .500 134 4 136 10 138 17 139 22 146 22z"
              fill={active ? "url(#tabActive)" : "#575757"}
              stroke={active ? "#8a8a8a" : "#464646"}
            />
            <defs>
              <linearGradient id="tabActive" x1="0" y1="0" x2="0" y2="1"><stop offset="0" stopColor="#858585" /><stop offset="1" stopColor="#5e5e5e" /></linearGradient>
            </defs>
          </svg>
          <button type="button" className="relative whitespace-nowrap">{f}</button>
          {i > 0 && <button type="button" aria-label={"Close " + f} className="relative text-[#383838]"><Cross /></button>}
        </div>
      );
    })}
    <button type="button" aria-label="New drawing" className="mt-1 ml-[9px] flex h-[15px] w-[22px] items-center justify-center rounded-tr-[10px] rounded-bl-[10px] bg-[#565656]">
      <svg width="8" height="8" viewBox="0 0 8 8"><path d="M4 0v8M0 4h8" stroke="#c8c8c8" strokeWidth="2" /></svg>
    </button>
  </div>
);

const Drawing = () => (
  <svg aria-label="Campo di Calcio" className="absolute top-0 left-0 h-full w-full" fill="none" stroke="#d8d8d6">
    <g transform="translate(-10 -183)">
      <path d="M411.500 339.500H1237.500V889.500H411.500zM824.500 339.500V889.500" />
      <path d="M411.500 464.500H537.500V763.500H411.500M411.500 547.500H458.500V681.500H411.500" />
      <path d="M1237.500 464.500H1111.500V763.500H1237.500M1237.500 547.500H1190.500V681.500H1237.500" />
      <circle cx="824.500" cy="614.500" r="71" strokeWidth="1.300" />
      <path d="M537.500 555.500A71 71 0 0 1 537.500 673.500M1111.500 555.500A71 71 0 0 0 1111.500 673.500" strokeWidth="1.300" />
      <circle cx="498.500" cy="614.500" r="2" />
      <circle cx="824.500" cy="614.500" r="2" />
      <circle cx="1150.500" cy="614.500" r="2" />
      <path d="M655 217.500h46M706 217.500h46M703.500 183v31M703.500 221v45M701.500 214.500h4v6h-4z" stroke="#f0ece6" />
      <path d="M30.500 924v50.500H81M26.500 969.500h9v9h-9zM85.500 960.500l12 12M97.500 960.500l-12 12M32.500 907.500l6 6.500 6-6.500M38.500 914v6" stroke="#f0ece6" />
    </g>
  </svg>
);

const ViewCube = () => (
  <div className="absolute top-[39px] right-[14px] grid h-[134px] w-[138px] grid-cols-3 grid-rows-3 place-items-center font-['Liberation_Sans'] text-[21px] leading-none font-bold text-[#b4b6b6]">
    <div className="absolute top-[6px] left-[8px] h-[122px] w-[122px] rounded-full border-[13px] border-[#4a4b4c]" />
    <span className="relative col-start-2 row-start-1 self-start">N</span>
    <span className="relative col-start-1 row-start-2 justify-self-start pl-[3px]">W</span>
    <button type="button" className="relative col-start-2 row-start-2 flex h-[52px] w-[52px] items-center justify-center border border-[#8f9090] bg-[#b0b2b2]">
      <span className="flex h-8 w-8 items-center justify-center bg-[#9fa1a1] text-[12px] text-[#4b4c4c]">TOP</span>
    </button>
    <span className="relative col-start-3 row-start-2 justify-self-end pr-[5px]">E</span>
    <span className="relative col-start-2 row-start-3 self-end">S</span>
  </div>
);

const NavBar = () => (
  <div className="absolute top-[235px] right-[3px] flex h-[214px] w-[33px] flex-col items-center rounded-[5px] border border-[#4a4b4c] bg-[#656565]">
    <svg aria-label="Navigation bar" width="31" height="212" viewBox="0 0 31 212" fill="none" stroke="#444" strokeWidth="1.200">
      <circle cx="25.500" cy="5" r="3.500" fill="#4e4e4e" stroke="none" />
      <path d="M24 3.500l3 3M27 3.500l-3 3" stroke="#777" />
      <path d="M16 19h10v11a10.500 10.500 0 1 1-10-11z" />
      <circle cx="15.500" cy="30" r="6" />
      <path d="M11.500 34.500L8 38M19.500 34.500L23 38" />
      <path d="M13 49h6l-3 3.500zM13 119h6l-3 3.500zM13 157h6l-3 3.500z" fill="#444" stroke="none" />
      <path d="M3 56.500h25M3 164.500h25" stroke="#737373" strokeWidth="1" />
      <path d="M10 83c-2-4-5-6-6-9 1-2 3-1 5 2l-2-10c1-2 3-1 3 1l2 6-1-10c1-2 3-2 3.500 0l1 9 1.500-9c1-2 3-1 3 1l-1 9 3-7c1-1 3-1 2.500 2l-4 15h-10z" />
      <path d="M5 90l14 15M19 90L5 105M5 94v-4h4M15 90h4v4M5 101v4h4" />
      <circle cx="20" cy="105" r="4.500" />
      <path d="M23.500 108.500l4 4" strokeWidth="2.500" />
      <path d="M13 148v-14h-2l4.500-5.500L20 134h-2v14z" />
      <path d="M13 137c-14 1-10 8 2 8 15 0 14-7 3-8M11 142l-4-2 4-2.500z" />
      <path d="M4.500 169.500h5v6h-5zM12.500 169.500h5v6h-5zM20.500 169.500h5v6h-5zM4.500 178.500h16v13h-16z" />
      <path d="M9 181v8l7-4z" fill="#444" stroke="none" />
      <circle cx="25.500" cy="206" r="3.500" fill="#4e4e4e" stroke="none" />
      <path d="M24 205h3M24 207h3" stroke="#777" />
    </svg>
  </div>
);

const Canvas = () => (
  <main className="relative flex min-h-0 flex-1 flex-col justify-end overflow-hidden bg-[#212830]">
    <Drawing />
    <button type="button" className="absolute top-[5px] left-[3px] text-[12px] leading-[18px] text-[#ececec]">[−][Top][2D Wireframe]</button>
    <p className="absolute top-[43px] left-[407px] font-['Liberation_Sans'] text-[22px] leading-[25px] text-white">Campo di Calcio</p>
    <div className="absolute top-[10px] right-[11px] flex items-center gap-[10px]">
      <button type="button" aria-label="Minimize drawing" className="mt-[6px] h-[4px] w-[10px] bg-[#eee]" />
      <button type="button" aria-label="Restore drawing">
        <svg width="10" height="10" viewBox="0 0 10 10" fill="none" stroke="#eee" className="block"><path d="M1 4h5v5H1z" strokeWidth="2" /><path d="M3 1h6v6" strokeWidth="1.200" /></svg>
      </button>
      <button type="button" aria-label="Close drawing" className="text-[#eee]">
        <svg width="10" height="10" viewBox="0 0 10 10" className="block"><path d="M1 1l8 8M9 1L1 9" stroke="#eee" strokeWidth="2.200" /></svg>
      </button>
    </div>
    <ViewCube />
    <button type="button" className="absolute top-[193px] right-[59px] flex h-[18px] w-12 items-center gap-[6px] rounded-[4px] border border-[#7d7e80] bg-[#8f9092] pl-1 font-['Liberation_Sans'] text-[11px] text-[#4c4d4f]">
      WCS
      <svg width="8" height="5" viewBox="0 0 8 5"><path d="M.500.500h7L4 4.500z" fill="#999a9c" stroke="#a9aaac" /></svg>
    </button>
    <NavBar />
    <div className="absolute right-[82px] bottom-[12px] text-[#80848a]">
      <p className="text-[19px] leading-[26px]">Activate Windows</p>
      <p className="text-[14px] leading-[20px]">Go to Settings to activate Windows.</p>
    </div>
    <div className="relative mr-[380px] ml-[381px]">
      <ul className="mb-px ml-[62px] flex flex-col items-start gap-[5px] font-['Liberation_Mono'] text-[12px] leading-[15px]">
        <li className="rounded-[2px] bg-[#4d4e4f] px-px text-[#a9a9a9]">Command:</li>
        <li className="rounded-[2px] bg-[#555657] px-px text-[#cacaca]">Command:</li>
        <li className="rounded-[2px] bg-[#5d5e5f] px-px text-white">Command:</li>
      </ul>
      <div className="flex h-[27px] items-center rounded-tl-[2px] border border-[#6b6b6b] bg-[#505050]">
        <svg aria-hidden="true" width="8" height="18" viewBox="0 0 8 18" className="ml-[2px]"><path d="M1.500 0v18M4.500 0v18M7.500 0v18" stroke="#999" strokeDasharray="2 1" /></svg>
        <button type="button" aria-label="Close command line" className="ml-1 text-[#ccc]">
          <svg width="10" height="10" viewBox="0 0 10 10" className="block"><path d="M1 1l8 8M9 1L1 9" stroke="#ccc" strokeWidth="1.700" /></svg>
        </button>
        <button type="button" aria-label="Customize command line" className="ml-[10px]"><Wrench className="block h-[14px] w-[14px] fill-[#ccc] text-[#ccc]" strokeWidth={1} /></button>
        <div className="ml-[6px] flex h-full flex-1 items-center bg-[#bbbcbe] pr-[4px] pl-[5px]">
          <Ico n="prompt" />
          <svg aria-hidden="true" className="ml-[2px]" width="6" height="4" viewBox="0 0 6 4"><path d="M0 0h6L3 4z" fill="#555" /></svg>
          <input aria-label="Command" placeholder="Type a command" className="ml-2 min-w-0 flex-1 bg-transparent font-['Liberation_Mono'] text-[12px] italic placeholder-[#6a6a6a] outline-none" />
          <svg aria-hidden="true" width="7" height="4" viewBox="0 0 7 4"><path d="M0 4h7L3.500 0z" fill="#222" /></svg>
        </div>
      </div>
    </div>
  </main>
);

const LayoutTab = ({ label, active, className }) => (
  <button type="button" className={"relative h-[18px] text-[12px] leading-4 " + className + (active ? " z-10 font-bold text-white" : " text-[#b6b6c2]")}>
    <svg aria-hidden="true" className="absolute inset-0 h-full w-full" viewBox="0 0 64 18" preserveAspectRatio="none">
      <path d="M0 0C5 2 5 14 12 17.500H54C60 15 60 3 64 0z" fill={active ? "#828282" : "#585858"} stroke={active ? "#8a8a8a" : "#4a4a4a"} />
    </svg>
    <span className="relative">{label}</span>
  </button>
);

const Cell = ({ children, className = "" }) => (
  <div className={"flex h-[25px] items-center border border-[#6d6d6d] bg-[#4b4b4b] " + className}>{children}</div>
);
const Toggle = ({ n, on, className = "" }) => (
  <button type="button" aria-label={n} aria-pressed={!!on} className={"flex h-[21px] w-[22px] shrink-0 items-center justify-center " + (on ? "bg-[#5f8bc0] " : "") + className}>
    <Ico n={n} />
  </button>
);

const StatusBar = () => (
  <footer className="flex h-[29px] shrink-0 items-start justify-between border-t border-[#555] bg-[#373737]">
    <div className="flex items-start pl-2">
      <LayoutTab label="Model" active className="w-[66px]" />
      <LayoutTab label="Layout1" className="-ml-[3px] w-[63px]" />
      <LayoutTab label="Layout2" className="w-[66px]" />
      <button type="button" aria-label="New layout" className="ml-[3px] flex h-4 w-6 items-center justify-center rounded-tl-[4px] rounded-br-[10px] bg-[#565656]">
        <svg width="8" height="8" viewBox="0 0 8 8"><path d="M4 0v8M0 4h8" stroke="#d0d0d0" strokeWidth="2" /></svg>
      </button>
    </div>
    <div className="flex h-[27px] items-center gap-px border border-[#6d6d6d] bg-[#404040] text-[12px] text-white">
      <Cell className="w-[49px] justify-center"><button type="button">MODEL</button></Cell>
      <Cell className="w-[65px]"><Toggle n="grid" /><Toggle n="snap" className="ml-[3px]" /><BigTri className="ml-[4px]" /></Cell>
      <Cell className="w-[103px]"><Toggle n="ortho" className="ml-px" /><Toggle n="polar" on className="ml-[2px]" /><BigTri className="ml-1" /><Toggle n="iso" className="ml-1" /><BigTri className="ml-[5px]" /></Cell>
      <Cell className="w-[64px]"><Toggle n="otrack" on /><Toggle n="osnap" on className="ml-[2px]" /><BigTri className="ml-1" /></Cell>
      <Cell className="w-[107px]"><Toggle n="anno1" on className="ml-px" /><Toggle n="anno2" className="ml-[3px]" /><Toggle n="anno3" className="ml-[2px]" /><span className="ml-[4px] w-[18px]">1:1</span><BigTri /></Cell>
      <Cell className="w-[38px]"><Toggle n="gear" /><BigTri className="ml-1" /></Cell>
      <Cell className="w-[26px] justify-center"><Toggle n="plus" /></Cell>
      <Cell className="w-[26px] justify-center"><Toggle n="shapes" /></Cell>
      <Cell className="w-[25px] justify-center"><Toggle n="docs" /></Cell>
      <Cell className="w-[50px] justify-between"><Toggle n="full" /><Toggle n="menu" /></Cell>
    </div>
  </footer>
);

export default function App() {
  return (
    <div className="relative flex h-screen w-full bg-linear-to-b from-[#d4d6d6] via-[#e3e5e5] to-[#bcbdbe] pt-[3px] pr-[9px] pb-[9px] pl-[10px] font-['Open_Sans',sans-serif]">
      <div aria-hidden="true" className="absolute inset-y-0 left-0 w-[10px] bg-linear-to-r from-[#f0f0ee] to-[#d6d8d8]">
        <div className="h-8 rounded-br-md bg-[#cfd3d2]" />
        <div className="mt-12 h-px bg-[#c0c2c2]" />
        <div className="mt-[46px] h-px bg-[#c0c2c2]" />
        <div className="mt-[645px] ml-[2px] h-8 border border-[#8c8c8c] bg-[#c6c7c8]" />
      </div>
      <div aria-hidden="true" className="absolute top-[358px] right-[6px] h-[219px] w-[2px] bg-[#777]" />
      <div aria-hidden="true" className="absolute right-7 bottom-[2px] h-3 w-6 border border-[#5a5fa0]" />
      <div className="relative flex min-w-0 flex-1 flex-col overflow-hidden rounded-[8px] shadow-[0_0_2px_1px_#a0a2a2]">
        <TitleBar />
        <MenuBar />
        <Ribbon />
        <FileTabs />
        <Canvas />
        <StatusBar />
      </div>
    </div>
  );
}
